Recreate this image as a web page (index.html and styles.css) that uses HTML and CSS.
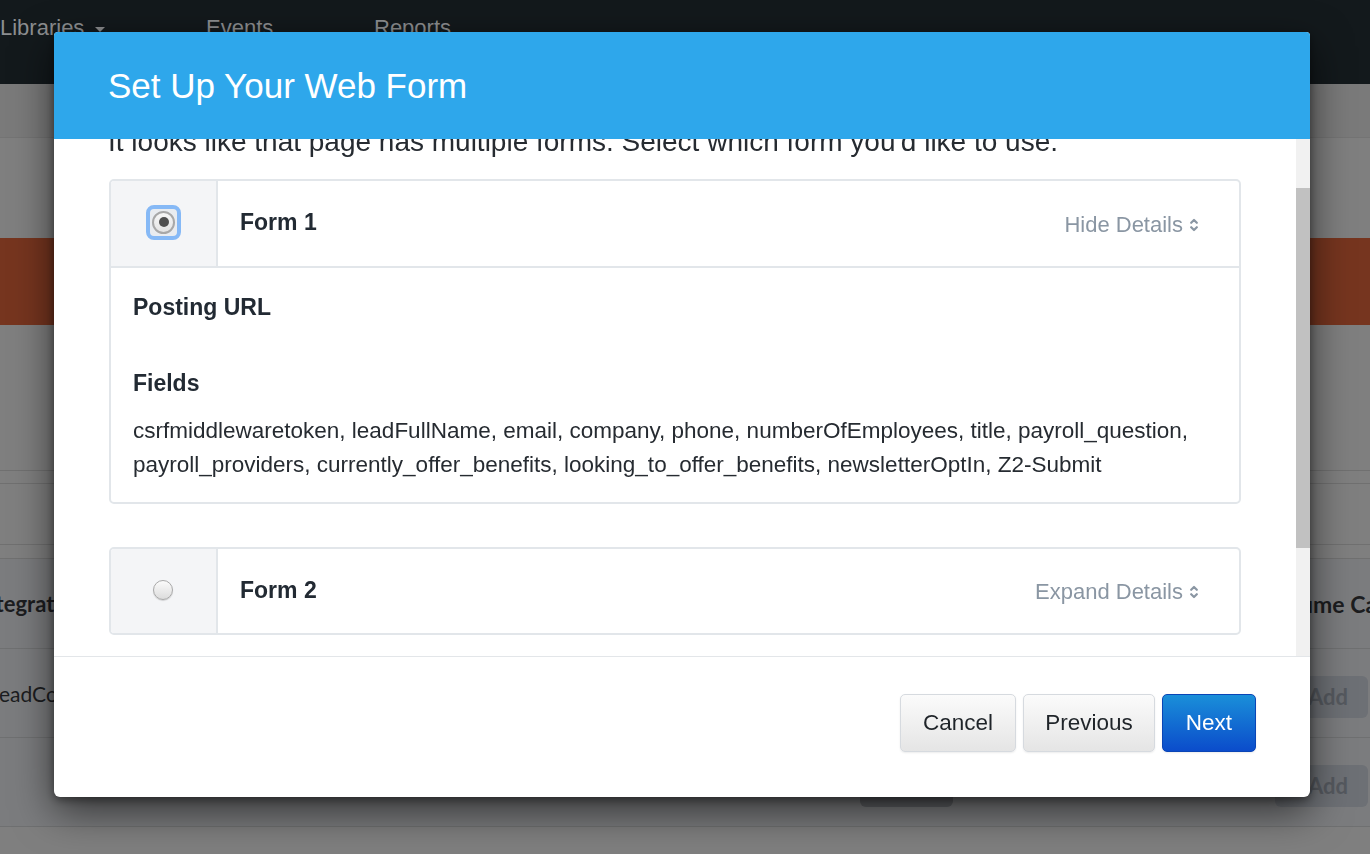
FILE: index.html
```html
<!DOCTYPE html>
<html lang="en">
<head>
<meta charset="utf-8">
<title>Set Up Your Web Form</title>
<link rel="stylesheet" href="styles.css">
</head>
<body>
  <div class="page">
    <nav class="topnav">
      <span class="nav-item nav-libraries">Libraries <span class="caret"></span></span>
      <span class="nav-item nav-events">Events</span>
      <span class="nav-item">Reports</span>
    </nav>
    <div class="subbar"></div>
    <div class="gap-a"></div>
    <div class="alert-band"></div>
    <div class="gap-b"></div>
    <div class="tab-strip"></div>
    <div class="filter-row"></div>
    <div class="table">
      <div class="trow thead">
        <span class="cell-name">Integration</span>
        <span class="cell-vol">Volume Cap</span>
      </div>
      <div class="trow">
        <span class="cell-name cell-lead">LeadConnector</span>
        <span class="cell-vol"><span class="bg-btn">Add</span></span>
      </div>
      <div class="trow">
        <span class="cell-name"></span>
        <span class="cell-mid"><span class="bg-btn"></span></span>
        <span class="cell-vol"><span class="bg-btn">Add</span></span>
      </div>
    </div>
  </div>

  <div class="modal">
    <header class="modal-head">
      <h1>Set Up Your Web Form</h1>
    </header>
    <div class="modal-body">
      <div class="scroll-content">
        <p class="intro">It looks like that page has multiple forms. Select which form you'd like to use.</p>

        <section class="form-card">
          <div class="card-head expanded">
            <div class="radio-cell">
              <span class="radio-focus"><span class="radio checked"><span class="dot"></span></span></span>
            </div>
            <div class="card-title">Form 1</div>
            <div class="toggle">Hide Details
              <svg class="chev" width="8" height="18" viewBox="0 0 8 18"><path d="M1.2 6.8 L4 4 L6.8 6.8 M1.2 11.2 L4 14 L6.8 11.2" fill="none" stroke="#8a96a3" stroke-width="2.2" stroke-linecap="round" stroke-linejoin="round"/></svg>
            </div>
          </div>
          <div class="card-body">
            <h4 class="label">Posting URL</h4>
            <div class="value-empty"></div>
            <h4 class="label">Fields</h4>
            <p class="fields">csrfmiddlewaretoken, leadFullName, email, company, phone, numberOfEmployees, title, payroll_question, payroll_providers, currently_offer_benefits, looking_to_offer_benefits, newsletterOptIn, Z2-Submit</p>
          </div>
        </section>

        <section class="form-card">
          <div class="card-head collapsed">
            <div class="radio-cell">
              <span class="radio"></span>
            </div>
            <div class="card-title">Form 2</div>
            <div class="toggle">Expand Details
              <svg class="chev" width="8" height="18" viewBox="0 0 8 18"><path d="M1.2 6.8 L4 4 L6.8 6.8 M1.2 11.2 L4 14 L6.8 11.2" fill="none" stroke="#8a96a3" stroke-width="2.2" stroke-linecap="round" stroke-linejoin="round"/></svg>
            </div>
          </div>
        </section>
      </div>
      <div class="scrollbar"><div class="thumb"></div></div>
    </div>
    <footer class="modal-foot">
      <button class="btn btn-cancel">Cancel</button>
      <button class="btn btn-prev">Previous</button>
      <button class="btn btn-primary">Next</button>
    </footer>
  </div>
</body>
</html>
```
FILE: styles.css
```css
html, body {
  margin: 0;
  padding: 0;
}
body {
  width: 1370px;
  height: 854px;
  overflow: hidden;
  background: #7f7f7f;
  font-family: "Liberation Sans", Arial, sans-serif;
}

/* ---------- background page (dimmed) ---------- */
.page {
  width: 1370px;
}
.topnav {
  height: 84px;
  background: #13191c;
  display: flex;
  align-items: flex-start;
  padding-top: 15px;
  box-sizing: border-box;
}
.nav-item {
  color: #8c8e90;
  font-size: 22px;
  line-height: 26px;
  white-space: nowrap;
}
.nav-libraries {
  width: 206px;
  display: flex;
  align-items: center;
}
.nav-events {
  width: 168px;
}
.caret {
  display: inline-block;
  margin-left: 11px;
  margin-top: 3px;
  width: 0;
  height: 0;
  border-left: 5px solid transparent;
  border-right: 5px solid transparent;
  border-top: 5px solid #8c8e90;
}
.subbar {
  height: 53px;
  background: #7a7a7a;
  border-bottom: 1px solid #747474;
}
.gap-a {
  height: 100px;
}
.alert-band {
  height: 87px;
  background: #76351f;
}
.gap-b {
  height: 145px;
}
.tab-strip {
  height: 12px;
  border-top: 1px solid #707070;
  border-bottom: 1px solid #707070;
}
.filter-row {
  height: 60px;
  border-bottom: 1px solid #707070;
}
.table {
  margin-top: 13px;
  border-top: 1px solid #707070;
  background: #7b7c7e;
  font-family: "Lato", "Open Sans", sans-serif;
}
.trow {
  height: 88px;
  border-bottom: 1px solid #6f7071;
  display: flex;
  align-items: center;
}
.thead {
  height: 89px;
  font-weight: 700;
}
.cell-name {
  width: 884px;
  margin-left: -23px;
  font-size: 22px;
  color: #1c1d1f;
  white-space: nowrap;
}
.cell-lead {
  margin-left: -11px;
  width: 872px;
  font-weight: 400;
  font-size: 21px;
}
.cell-mid {
  width: 415px;
}
.cell-vol {
  margin-left: auto;
  width: 95px;
  font-size: 22px;
  color: #1c1d1f;
  white-space: nowrap;
}
.thead .cell-vol {
  width: 103px;
  font-size: 23px;
  overflow: hidden;
}
.bg-btn {
  display: inline-block;
  width: 93px;
  height: 42px;
  line-height: 42px;
  margin-top: 8px;
  border-radius: 6px;
  background: #6d7075;
  color: #55595f;
  font-weight: 700;
  font-size: 22px;
  text-indent: 33px;
  overflow: hidden;
  vertical-align: top;
}
.cell-mid .bg-btn {
  background: #5f6165;
}

/* ---------- modal ---------- */
.modal {
  position: fixed;
  left: 54px;
  top: 32px;
  width: 1256px;
  background: #ffffff;
  border-radius: 4px 4px 6px 6px;
  overflow: hidden;
  box-shadow: 0 14px 40px rgba(0, 0, 0, 0.6), 0 3px 8px rgba(0, 0, 0, 0.4);
  color: #262b31;
}
.modal-head {
  height: 107px;
  background: #2ea7eb;
  display: flex;
  align-items: center;
  padding-left: 54px;
  box-sizing: border-box;
  position: relative;
  z-index: 1;
}
.modal-head h1 {
  margin: 0;
  font-weight: 400;
  font-size: 35px;
  color: #ffffff;
}
.modal-body {
  display: flex;
  height: 517px;
  border-bottom: 1px solid #e3e6e9;
}
.scroll-content {
  flex: 1;
  overflow: hidden;
  padding: 0 55px;
}
.scrollbar {
  width: 14px;
  background: #f1f1f1;
  padding-top: 49px;
  box-sizing: border-box;
}
.thumb {
  height: 360px;
  background: #c1c1c1;
}
.intro {
  margin: -14px 0 20px -1px;
  font-size: 28px;
  line-height: 34px;
  color: #262b31;
  white-space: nowrap;
}

.form-card {
  border: 2px solid #e2e6ea;
  border-radius: 5px;
  margin-bottom: 43px;
  overflow: hidden;
}
.card-head {
  display: flex;
  height: 85px;
  align-items: stretch;
}
.card-head.expanded {
  border-bottom: 2px solid #e2e6ea;
}
.card-head.collapsed {
  height: 84px;
}
.radio-cell {
  width: 105px;
  background: #f4f5f7;
  border-right: 2px solid #e2e6ea;
  display: flex;
  align-items: center;
  justify-content: center;
}
.card-head.expanded .radio-cell {
  padding-bottom: 3px;
}
.radio-focus {
  width: 35px;
  height: 35px;
  box-sizing: border-box;
  border-radius: 8px;
  border: 4px solid #86b9f6;
  background: #e9ecf0;
  display: flex;
  align-items: center;
  justify-content: center;
}
.radio {
  width: 20px;
  height: 20px;
  box-sizing: border-box;
  border-radius: 50%;
  border: 1px solid #a9a9a9;
  background: linear-gradient(#fbfbfb, #dcdcdc);
  box-shadow: 0 1px 1px rgba(0, 0, 0, 0.15);
  display: flex;
  align-items: center;
  justify-content: center;
}
.radio-cell > .radio {
  margin-right: 2px;
  margin-bottom: 2px;
}
.radio.checked {
  width: 23px;
  height: 23px;
  border: 2px solid #a8a8a8;
  background: linear-gradient(#f7f7f7, #e4e4e4);
  box-shadow: none;
}
.dot {
  width: 10px;
  height: 10px;
  border-radius: 50%;
  background: #505050;
}
.card-title {
  flex: 1;
  display: flex;
  align-items: center;
  padding-left: 22px;
  padding-bottom: 2px;
  font-size: 23px;
  font-weight: 700;
  color: #222a33;
}
.toggle {
  display: flex;
  align-items: center;
  gap: 7px;
  padding-right: 41px;
  padding-top: 2px;
  font-size: 22px;
  color: #8a96a3;
}
.chev {
  display: block;
}
.card-body {
  padding: 22px 22px 20px;
}
.label {
  margin: 0;
  font-size: 23px;
  line-height: 34px;
  font-weight: 700;
  color: #222a33;
}
.value-empty {
  height: 42px;
}
.fields {
  margin: 14px 0 0;
  font-size: 22.5px;
  line-height: 34px;
  color: #262b31;
}

.modal-foot {
  height: 140px;
  display: flex;
  justify-content: flex-end;
  align-items: flex-start;
  gap: 7px;
  padding: 37px 54px 0 0;
  box-sizing: border-box;
}
.btn {
  height: 58px;
  padding: 0;
  border: 1px solid #d6dadf;
  border-radius: 5px;
  background: linear-gradient(#fbfbfb, #e5e5e5);
  font-family: "Liberation Sans", Arial, sans-serif;
  font-size: 22.5px;
  color: #1f2429;
  box-shadow: 0 1px 2px rgba(0, 0, 0, 0.08);
}
.btn-cancel {
  width: 116px;
}
.btn-prev {
  width: 132px;
}
.btn-primary {
  width: 94px;
  border-color: #0a45b6;
  background: linear-gradient(#1a8fd9, #0b4ccb);
  color: #ffffff;
}
```
